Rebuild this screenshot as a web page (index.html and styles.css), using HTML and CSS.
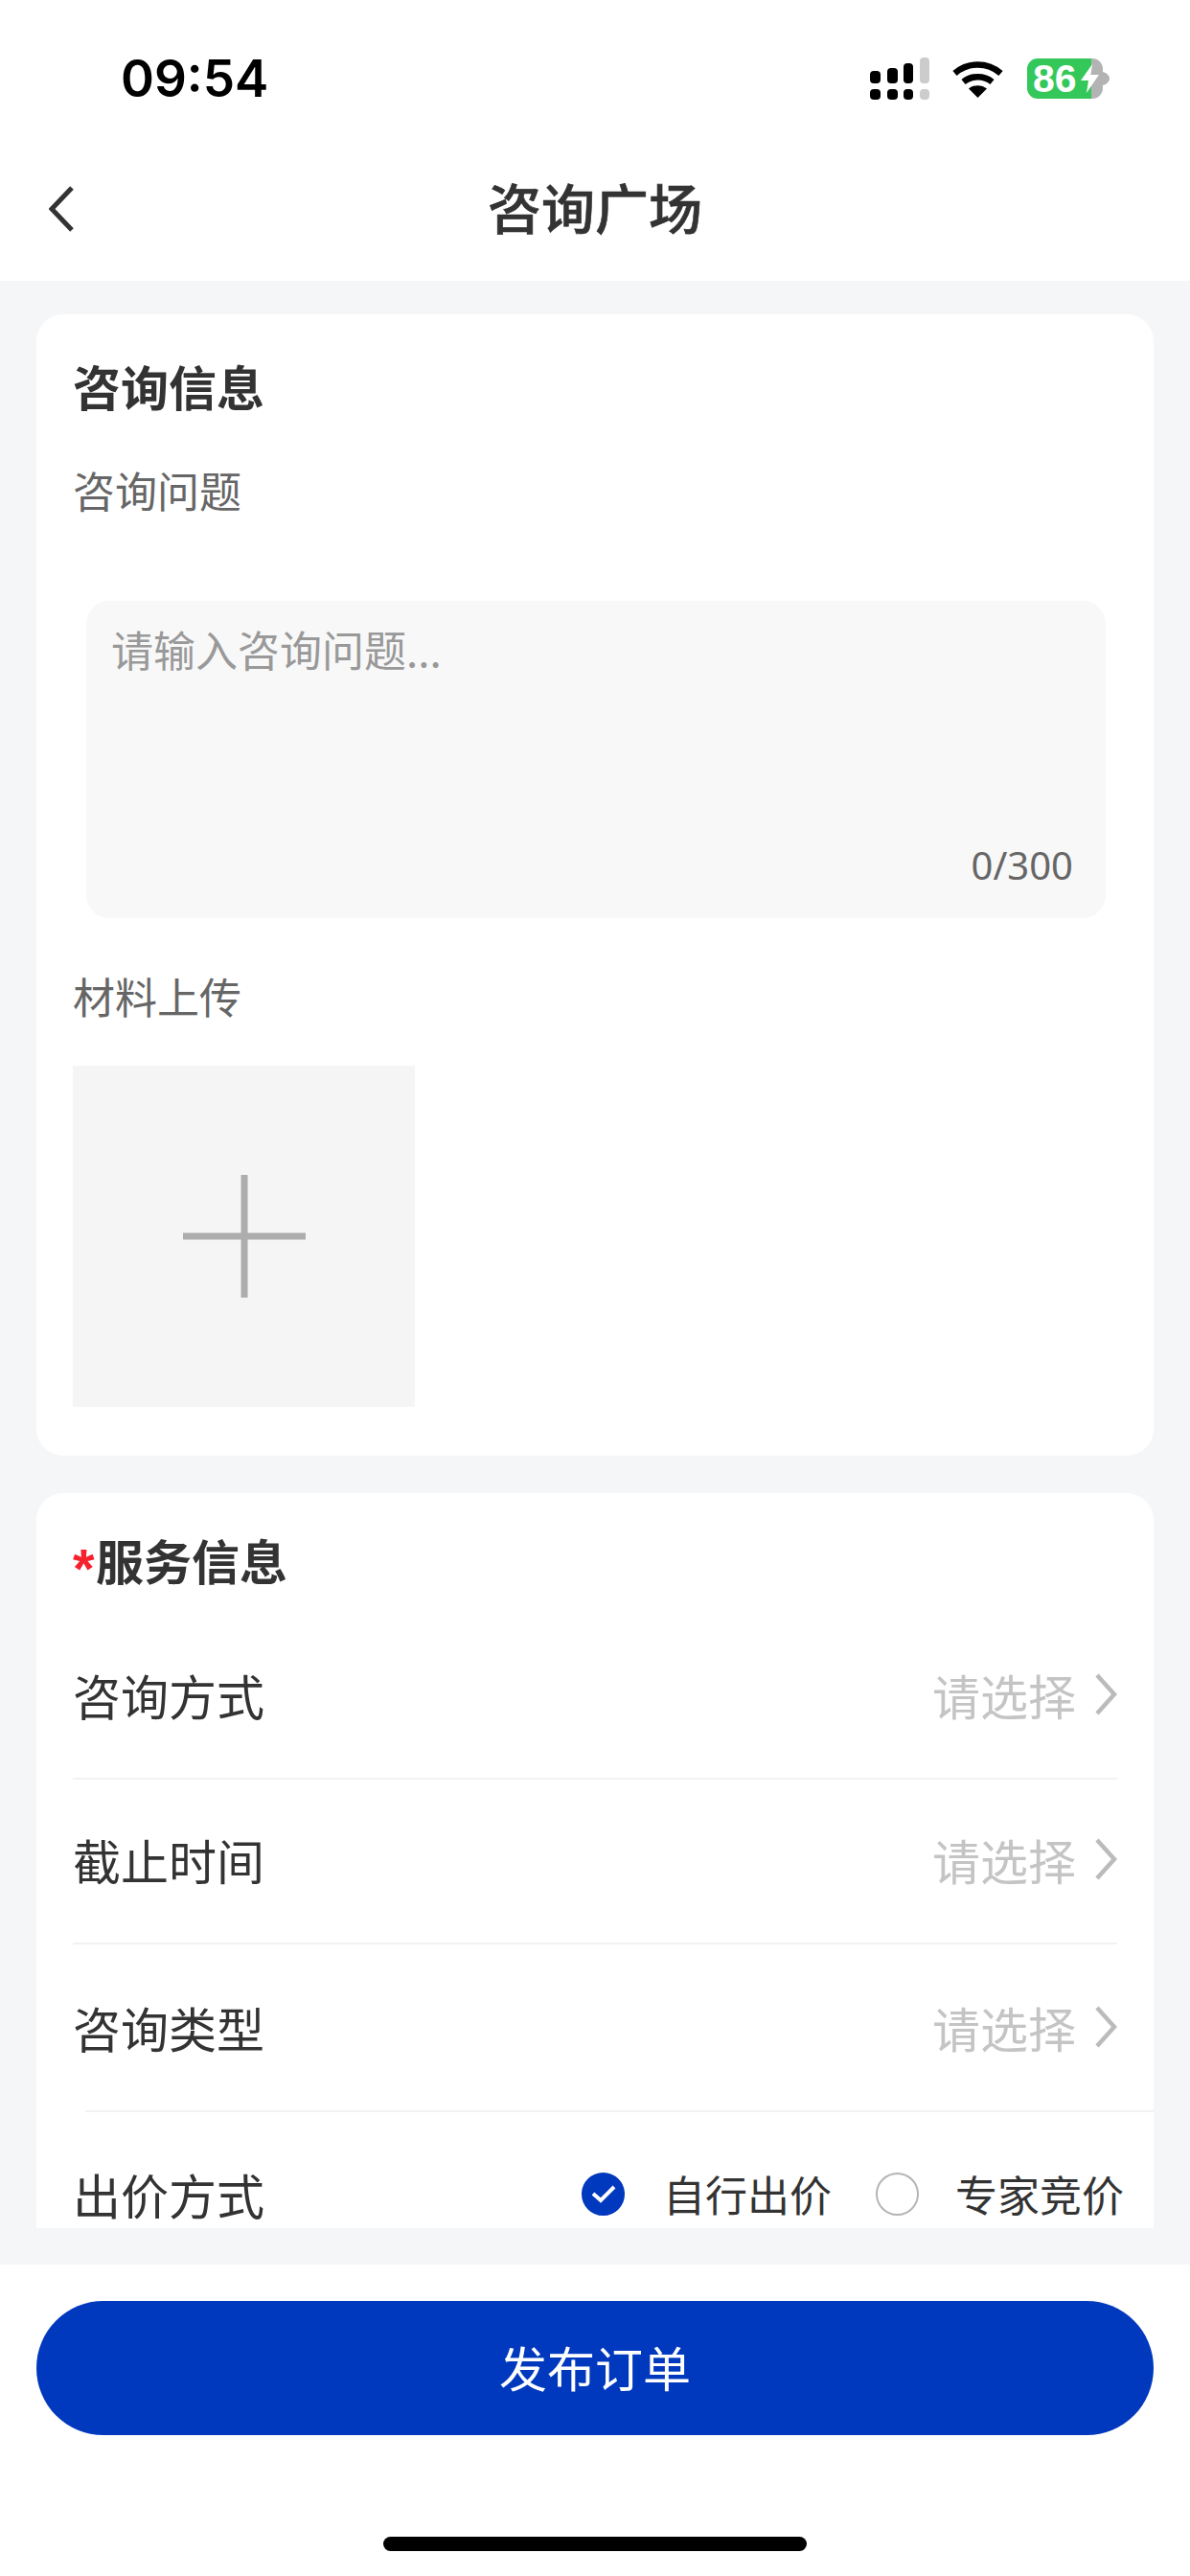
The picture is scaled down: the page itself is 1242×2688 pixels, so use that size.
FILE: index.html
```html
<!DOCTYPE html>
<html lang="zh-CN">
<head>
<meta charset="utf-8">
<title>咨询广场</title>
<link rel="stylesheet" href="styles.css">
</head>
<body>
<div class="page">
  <header class="top">
    <div class="status">
      <span class="time">09:54</span>
      <div class="status-icons">
        <svg class="signal" width="62" height="44" viewBox="0 0 62 44">
          <rect x="0" y="14" width="11" height="13" rx="4" fill="#000"/>
          <rect x="18" y="11" width="11" height="16" rx="4" fill="#000"/>
          <rect x="35" y="6" width="10" height="21" rx="4" fill="#000"/>
          <rect x="52" y="0" width="10" height="27" rx="4" fill="#ccc"/>
          <rect x="0" y="33" width="11" height="11" rx="4" fill="#000"/>
          <rect x="18" y="33" width="11" height="11" rx="4" fill="#000"/>
          <rect x="35" y="33" width="10" height="11" rx="4" fill="#000"/>
          <rect x="52" y="33" width="10" height="11" rx="4" fill="#ccc"/>
        </svg>
        <svg class="wifi" width="53" height="39" viewBox="0 0 53 39">
          <path d="M2.500 13.500C16.500 1.500 36.500 1.500 50.500 13.500" fill="none" stroke="#000" stroke-width="6.500"/>
          <path d="M11.500 22.500C20 15.500 33 15.500 41.500 22.500" fill="none" stroke="#000" stroke-width="6.500"/>
          <path d="M17 29.500C22.500 25 30.500 25 36 29.500L26.500 39Z" fill="#000"/>
        </svg>
        <div class="battery">
          <div class="battery-body">
            <span class="battery-num">86</span>
            <svg class="bolt" width="19" height="30" viewBox="0 0 19 30"><path d="M12 0L0 17H8L6 30L19 11H10.500Z" fill="#fff"/></svg>
          </div>
          <svg class="nib" width="7" height="14" viewBox="0 0 7 14"><path d="M0 0C4 1 7 4 7 7C7 10 4 13 0 14Z" fill="#b3b3b3"/></svg>
        </div>
      </div>
    </div>
    <nav class="nav">
      <svg class="back" width="26" height="48" viewBox="0 0 26 48"><path d="M24 2L3 24L24 46" fill="none" stroke="#333" stroke-width="5"/></svg>
      <h1 class="nav-title">咨询广场</h1>
    </nav>
  </header>

  <main class="main">
    <div class="scroller">
      <section class="card card-info">
        <h2 class="card-title">咨询信息</h2>
        <div class="field-label question-label">咨询问题</div>
        <div class="textarea">
          <div class="placeholder">请输入咨询问题...</div>
          <div class="counter">0/300</div>
        </div>
        <div class="field-label upload-label">材料上传</div>
        <div class="upload">
          <svg width="128" height="128" viewBox="0 0 128 128"><path d="M0 64H128M64 0V128" stroke="#adadad" stroke-width="7"/></svg>
        </div>
      </section>

      <section class="card card-service">
        <h2 class="card-title"><span class="star">*</span>服务信息</h2>
        <div class="row">
          <span class="row-label">咨询方式</span>
          <span class="row-value">请选择<svg class="chev" width="24" height="44" viewBox="0 0 24 44"><path d="M3 2L21 22L3 42" fill="none" stroke="#bbb" stroke-width="4.500"/></svg></span>
        </div>
        <div class="row">
          <span class="row-label">截止时间</span>
          <span class="row-value">请选择<svg class="chev" width="24" height="44" viewBox="0 0 24 44"><path d="M3 2L21 22L3 42" fill="none" stroke="#bbb" stroke-width="4.500"/></svg></span>
        </div>
        <div class="row row-wide">
          <span class="row-label">咨询类型</span>
          <span class="row-value">请选择<svg class="chev" width="24" height="44" viewBox="0 0 24 44"><path d="M3 2L21 22L3 42" fill="none" stroke="#bbb" stroke-width="4.500"/></svg></span>
        </div>
        <div class="row row-last">
          <span class="row-label">出价方式</span>
          <div class="options">
            <span class="radio radio-on"><svg width="26" height="20" viewBox="0 0 26 20"><path d="M2 10L10 17L24 3" fill="none" stroke="#fff" stroke-width="4"/></svg></span>
            <span class="option-text first-option">自行出价</span>
            <span class="radio"></span>
            <span class="option-text">专家竞价</span>
          </div>
        </div>
      </section>
    </div>
  </main>

  <footer class="footer">
    <button class="submit" type="button">发布订单</button>
    <div class="home-bar"></div>
  </footer>
</div>
</body>
</html>
```

FILE: styles.css
```css
* { box-sizing: border-box; }
html, body { margin: 0; padding: 0; }
body {
  width: 1242px;
  height: 2688px;
  overflow: hidden;
  background: #fff;
  color: #333;
  font-family: "Noto Sans CJK SC", "Liberation Sans", sans-serif;
}
.page { width: 1242px; height: 2688px; display: flex; flex-direction: column; }

.top { height: 293px; background: #fff; flex: none; }
.status {
  height: 143px;
  padding: 21px 84px 0 126px;
  display: flex;
  justify-content: space-between;
  align-items: center;
}
.time {
  font-family: "Inter", "Liberation Sans", sans-serif;
  font-size: 53px;
  font-weight: 600;
  color: #000;
  line-height: 60px;
}
.status-icons { display: flex; align-items: center; }
.signal { margin-right: 24px; }
.wifi { margin-right: 25px; }
.battery { display: flex; align-items: center; }
.battery-body {
  width: 79px;
  height: 42px;
  border-radius: 11px;
  background: linear-gradient(to right, #34c759 0, #34c759 67px, #b3b3b3 67px);
  display: flex;
  align-items: center;
  padding-left: 6px;
  gap: 4px;
  overflow: hidden;
}
.battery-num {
  font-family: "Liberation Sans", sans-serif;
  font-weight: 700;
  font-size: 41px;
  line-height: 42px;
  color: #fff;
}
.bolt { flex: none; }
.nib { flex: none; }

.nav {
  height: 150px;
  padding-bottom: 6px;
  position: relative;
  display: flex;
  align-items: center;
  justify-content: center;
}
.back { position: absolute; left: 51px; top: 51px; }
.nav-title {
  margin: 0;
  font-size: 56px;
  font-weight: 500;
  line-height: 80px;
  color: #333;
  -webkit-text-stroke: 0.6px #333;
}

.main {
  flex: none;
  height: 2070px;
  background: #f5f6f8;
  padding: 35px 38px 38px;
}
.scroller { height: 1997px; overflow: hidden; }
.card { background: #fff; border-radius: 28px; padding: 0 38px; }
.card-info { height: 1191px; padding-top: 39px; margin-bottom: 39px; }
.card-service { padding-top: 34px; }
.card-title {
  margin: 0;
  height: 70px;
  font-size: 50px;
  font-weight: 700;
  line-height: 70px;
  color: #333;
}
.star {
  display: inline-block;
  width: 24px;
  font-family: "Liberation Sans", sans-serif;
  font-size: 58px;
  font-weight: 700;
  line-height: 20px;
  vertical-align: -8px;
  color: #f5222d;
}
.field-label { font-size: 44px; line-height: 60px; color: #666; }
.question-label { margin-top: 44px; }
.upload-label { margin-top: 51px; }
.textarea {
  margin: 86px 12px 0 14px;
  height: 331px;
  background: #f8f8f8;
  border-radius: 24px;
  padding: 20px 34px 30px 26px;
  display: flex;
  flex-direction: column;
  justify-content: space-between;
}
.placeholder { font-size: 44px; line-height: 60px; color: #999; }
.counter {
  text-align: right;
  font-family: "Noto Sans", sans-serif;
  font-size: 40px;
  line-height: 50px;
  color: #666;
}
.upload {
  margin-top: 43px;
  width: 357px;
  height: 356px;
  background: #f5f5f5;
  display: flex;
  align-items: center;
  justify-content: center;
}
.upload svg { display: block; }

.card-service .card-title { margin-bottom: 23px; }
.row {
  height: 172px;
  padding-bottom: 4px;
  display: flex;
  align-items: center;
  justify-content: space-between;
  border-bottom: 2px solid #f2f2f2;
}
.row-wide { height: 175px; border-bottom: 0; position: relative; }
.row-wide::after {
  content: "";
  position: absolute;
  left: 13px;
  right: -38px;
  bottom: 0;
  height: 2px;
  background: #f2f2f2;
}
.row-last { border-bottom: 0; margin-right: -7px; padding-bottom: 2px; }
.row-label { font-size: 50px; line-height: 70px; color: #333; }
.row-value { display: flex; align-items: center; font-size: 50px; line-height: 70px; color: #c4c4c4; }
.chev { margin-left: 19px; display: block; }
.options { display: flex; align-items: center; }
.radio {
  width: 45px;
  height: 45px;
  border-radius: 50%;
  border: 2px solid #b5b5b5;
  display: flex;
  align-items: center;
  justify-content: center;
}
.radio-on { background: #0038be; border-color: #0038be; }
.option-text { font-size: 44px; line-height: 60px; color: #333; margin-left: 38px; }
.first-option { margin-left: 40px; margin-right: 46px; }

.footer {
  flex: 1;
  background: #fff;
  padding: 38px 38px 0;
}
.submit {
  display: block;
  width: 100%;
  height: 140px;
  border: 0;
  border-radius: 70px;
  background: #0038be;
  color: #fff;
  font-family: inherit;
  font-size: 50px;
  padding: 0 0 4px;
}
.home-bar {
  width: 442px;
  height: 15px;
  border-radius: 8px;
  background: #000;
  margin: 106px auto 0;
}
```
